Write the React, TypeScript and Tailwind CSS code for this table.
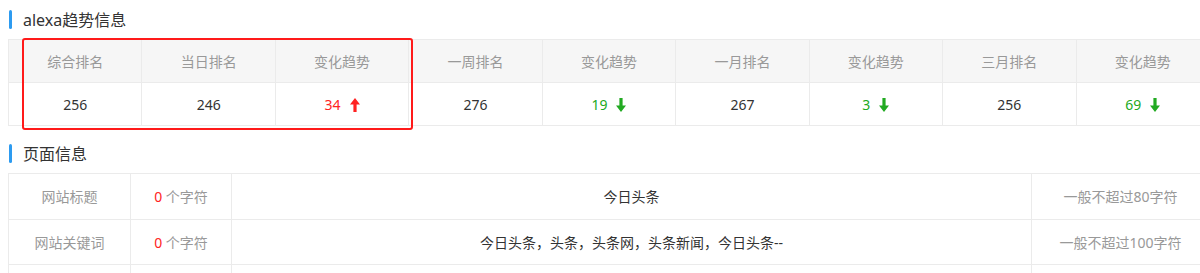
import React from "react";

const FONT = { fontFamily: '"Noto Sans", "Noto Sans CJK SC", sans-serif' };

function Arrow({ up, color }: { up: boolean; color: string }) {
  return (
    <svg width="10" height="14" viewBox="0 0 10 14" className="inline-block ml-[9px] align-[-2px]" style={{ transform: up ? "none" : "rotate(180deg)" }}>
      <path d="M5 0 L10 6.5 L6.6 6.5 L6.6 14 L3.4 14 L3.4 6.5 L0 6.5 Z" fill={color} />
    </svg>
  );
}

function Heading({ children }: { children: React.ReactNode }) {
  return (
    <div className="flex items-center h-[19px] pl-[9px]">
      <div className="w-[3px] h-[19px] rounded-full bg-[#2d9bf0]" />
      <span className="ml-[11px] text-[16px] text-[#333] leading-none">{children}</span>
    </div>
  );
}

const headers = ["综合排名", "当日排名", "变化趋势", "一周排名", "变化趋势", "一月排名", "变化趋势", "三月排名", "变化趋势"];

type Cell = { v: string; trend?: "up" | "down" };
const values: Cell[] = [
  { v: "256" },
  { v: "246" },
  { v: "34", trend: "up" },
  { v: "276" },
  { v: "19", trend: "down" },
  { v: "267" },
  { v: "3", trend: "down" },
  { v: "256" },
  { v: "69", trend: "down" },
];

export default function App() {
  return (
    <div className="w-[1200px] h-[273px] overflow-hidden bg-white relative pt-[10px]" style={FONT}>
      <Heading>alexa趋势信息</Heading>
      <div className="pl-[8px] mt-[10px]">
        <table className="w-[1202px] table-fixed border-collapse text-[14px]">
          <tbody>
            <tr className="h-[43px] bg-[#f6f6f6]">
              {headers.map((h, i) => (
                <td key={i} className="border border-[#ebebeb] text-center text-[#999]">{h}</td>
              ))}
            </tr>
            <tr className="h-[43px]">
              {values.map((c, i) => (
                <td key={i} className="border border-[#ebebeb] text-center">
                  {c.trend ? (
                    <span className={c.trend === "up" ? "text-[#ff2222]" : "text-[#22aa22]"}>
                      {c.v}
                      <Arrow up={c.trend === "up"} color={c.trend === "up" ? "#ff2222" : "#22aa22"} />
                    </span>
                  ) : (
                    <span className="text-[#333]">{c.v}</span>
                  )}
                </td>
              ))}
            </tr>
          </tbody>
        </table>
      </div>
      <div className="mt-[18px]">
        <Heading>页面信息</Heading>
      </div>
      <div className="pl-[8px] mt-[10px]">
        <table className="w-[1202px] table-fixed border-collapse text-[14px]">
          <colgroup>
            <col className="w-[122px]" />
            <col className="w-[101px]" />
            <col className="w-[800px]" />
            <col />
          </colgroup>
          <tbody>
            <tr className="h-[46px]">
              <td className="border border-[#ebebeb] text-center text-[#999]">网站标题</td>
              <td className="border border-[#ebebeb] text-center text-[#999]">
                <span className="text-[#ff2222]">0</span> 个字符
              </td>
              <td className="border border-[#ebebeb] text-center text-[#333]">今日头条</td>
              <td className="border border-[#ebebeb] text-center text-[#999]">一般不超过80字符</td>
            </tr>
            <tr className="h-[45px]">
              <td className="border border-[#ebebeb] text-center text-[#999]">网站关键词</td>
              <td className="border border-[#ebebeb] text-center text-[#999]">
                <span className="text-[#ff2222]">0</span> 个字符
              </td>
              <td className="border border-[#ebebeb] text-center text-[#333]">今日头条，头条，头条网，头条新闻，今日头条--</td>
              <td className="border border-[#ebebeb] text-center text-[#999]">一般不超过100字符</td>
            </tr>
            <tr className="h-[45px]">
              <td className="border border-[#ebebeb]"></td>
              <td className="border border-[#ebebeb]"></td>
              <td className="border border-[#ebebeb]"></td>
              <td className="border border-[#ebebeb]"></td>
            </tr>
          </tbody>
        </table>
      </div>
      <div className="absolute left-[22px] top-[38px] w-[391px] h-[92px] border-2 border-[#ff1a1a] rounded-[3px] pointer-events-none" />
    </div>
  );
}
